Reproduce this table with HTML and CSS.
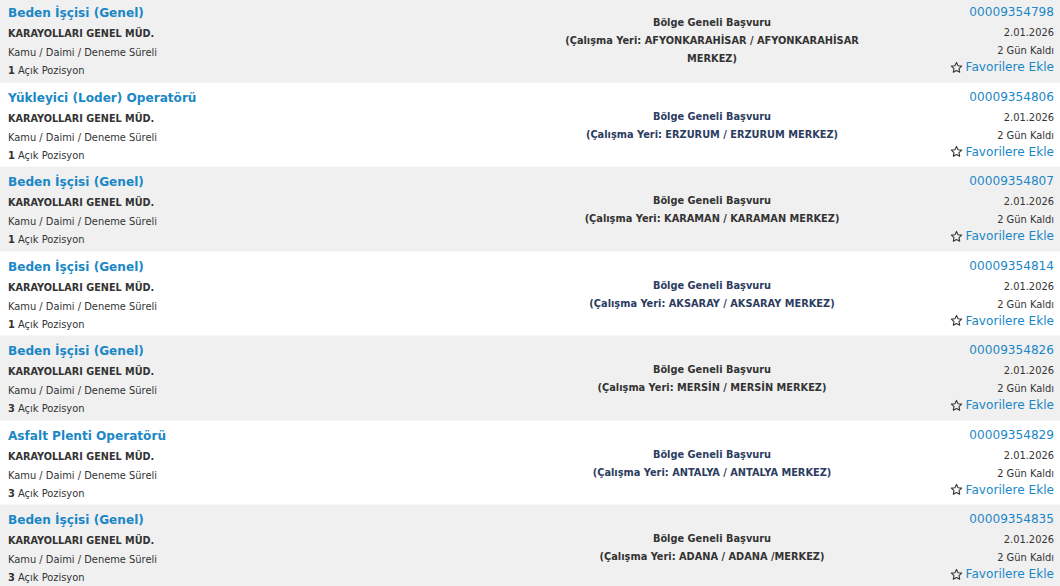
FILE: index.html
```html
<!DOCTYPE html>
<html lang="tr">
<head>
<meta charset="utf-8">
<link rel="stylesheet" href="styles.css">
</head>
<body>
<div class="list">
  <div class="row alt">
    <div class="left">
      <a class="title">Beden İşçisi (Genel)</a>
      <div class="org">KARAYOLLARI GENEL MÜD.</div>
      <div class="sub">Kamu / Daimi / Deneme Süreli</div>
      <div class="sub"><b>1</b> Açık Pozisyon</div>
    </div>
    <div class="mid">Bölge Geneli Başvuru<br>(Çalışma Yeri: AFYONKARAHİSAR / AFYONKARAHİSAR MERKEZ)</div>
    <div class="right">
      <a class="num">00009354798</a>
      <div class="sub">2.01.2026</div>
      <div class="sub">2 Gün Kaldı</div>
      <a class="fav"><svg class="star" viewBox="0 0 24 24"><path d="M12 2.6l2.9 6.1 6.6.8-4.9 4.6 1.3 6.6L12 17.4l-5.9 3.3 1.3-6.6-4.9-4.6 6.6-.8z"/></svg>Favorilere Ekle</a>
    </div>
  </div>
  <div class="row">
    <div class="left">
      <a class="title">Yükleyici (Loder) Operatörü</a>
      <div class="org">KARAYOLLARI GENEL MÜD.</div>
      <div class="sub">Kamu / Daimi / Deneme Süreli</div>
      <div class="sub"><b>1</b> Açık Pozisyon</div>
    </div>
    <div class="mid">Bölge Geneli Başvuru<br>(Çalışma Yeri: ERZURUM / ERZURUM MERKEZ)</div>
    <div class="right">
      <a class="num">00009354806</a>
      <div class="sub">2.01.2026</div>
      <div class="sub">2 Gün Kaldı</div>
      <a class="fav"><svg class="star" viewBox="0 0 24 24"><path d="M12 2.6l2.9 6.1 6.6.8-4.9 4.6 1.3 6.6L12 17.4l-5.9 3.3 1.3-6.6-4.9-4.6 6.6-.8z"/></svg>Favorilere Ekle</a>
    </div>
  </div>
  <div class="row alt">
    <div class="left">
      <a class="title">Beden İşçisi (Genel)</a>
      <div class="org">KARAYOLLARI GENEL MÜD.</div>
      <div class="sub">Kamu / Daimi / Deneme Süreli</div>
      <div class="sub"><b>1</b> Açık Pozisyon</div>
    </div>
    <div class="mid">Bölge Geneli Başvuru<br>(Çalışma Yeri: KARAMAN / KARAMAN MERKEZ)</div>
    <div class="right">
      <a class="num">00009354807</a>
      <div class="sub">2.01.2026</div>
      <div class="sub">2 Gün Kaldı</div>
      <a class="fav"><svg class="star" viewBox="0 0 24 24"><path d="M12 2.6l2.9 6.1 6.6.8-4.9 4.6 1.3 6.6L12 17.4l-5.9 3.3 1.3-6.6-4.9-4.6 6.6-.8z"/></svg>Favorilere Ekle</a>
    </div>
  </div>
  <div class="row">
    <div class="left">
      <a class="title">Beden İşçisi (Genel)</a>
      <div class="org">KARAYOLLARI GENEL MÜD.</div>
      <div class="sub">Kamu / Daimi / Deneme Süreli</div>
      <div class="sub"><b>1</b> Açık Pozisyon</div>
    </div>
    <div class="mid">Bölge Geneli Başvuru<br>(Çalışma Yeri: AKSARAY / AKSARAY MERKEZ)</div>
    <div class="right">
      <a class="num">00009354814</a>
      <div class="sub">2.01.2026</div>
      <div class="sub">2 Gün Kaldı</div>
      <a class="fav"><svg class="star" viewBox="0 0 24 24"><path d="M12 2.6l2.9 6.1 6.6.8-4.9 4.6 1.3 6.6L12 17.4l-5.9 3.3 1.3-6.6-4.9-4.6 6.6-.8z"/></svg>Favorilere Ekle</a>
    </div>
  </div>
  <div class="row alt">
    <div class="left">
      <a class="title">Beden İşçisi (Genel)</a>
      <div class="org">KARAYOLLARI GENEL MÜD.</div>
      <div class="sub">Kamu / Daimi / Deneme Süreli</div>
      <div class="sub"><b>3</b> Açık Pozisyon</div>
    </div>
    <div class="mid">Bölge Geneli Başvuru<br>(Çalışma Yeri: MERSİN / MERSİN MERKEZ)</div>
    <div class="right">
      <a class="num">00009354826</a>
      <div class="sub">2.01.2026</div>
      <div class="sub">2 Gün Kaldı</div>
      <a class="fav"><svg class="star" viewBox="0 0 24 24"><path d="M12 2.6l2.9 6.1 6.6.8-4.9 4.6 1.3 6.6L12 17.4l-5.9 3.3 1.3-6.6-4.9-4.6 6.6-.8z"/></svg>Favorilere Ekle</a>
    </div>
  </div>
  <div class="row">
    <div class="left">
      <a class="title">Asfalt Plenti Operatörü</a>
      <div class="org">KARAYOLLARI GENEL MÜD.</div>
      <div class="sub">Kamu / Daimi / Deneme Süreli</div>
      <div class="sub"><b>3</b> Açık Pozisyon</div>
    </div>
    <div class="mid">Bölge Geneli Başvuru<br>(Çalışma Yeri: ANTALYA / ANTALYA MERKEZ)</div>
    <div class="right">
      <a class="num">00009354829</a>
      <div class="sub">2.01.2026</div>
      <div class="sub">2 Gün Kaldı</div>
      <a class="fav"><svg class="star" viewBox="0 0 24 24"><path d="M12 2.6l2.9 6.1 6.6.8-4.9 4.6 1.3 6.6L12 17.4l-5.9 3.3 1.3-6.6-4.9-4.6 6.6-.8z"/></svg>Favorilere Ekle</a>
    </div>
  </div>
  <div class="row alt">
    <div class="left">
      <a class="title">Beden İşçisi (Genel)</a>
      <div class="org">KARAYOLLARI GENEL MÜD.</div>
      <div class="sub">Kamu / Daimi / Deneme Süreli</div>
      <div class="sub"><b>3</b> Açık Pozisyon</div>
    </div>
    <div class="mid">Bölge Geneli Başvuru<br>(Çalışma Yeri: ADANA / ADANA /MERKEZ)</div>
    <div class="right">
      <a class="num">00009354835</a>
      <div class="sub">2.01.2026</div>
      <div class="sub">2 Gün Kaldı</div>
      <a class="fav"><svg class="star" viewBox="0 0 24 24"><path d="M12 2.6l2.9 6.1 6.6.8-4.9 4.6 1.3 6.6L12 17.4l-5.9 3.3 1.3-6.6-4.9-4.6 6.6-.8z"/></svg>Favorilere Ekle</a>
    </div>
  </div>
</div>
</body>
</html>
```
FILE: styles.css
```css
html, body {
  margin: 0;
  padding: 0;
  background: #ffffff;
}
body {
  font-family: "DejaVu Sans", Verdana, sans-serif;
  color: #333333;
  overflow: hidden;
}
.list {
  margin-top: -2px;
  display: flex;
  flex-direction: column;
}
.row {
  height: 84.5px;
  box-sizing: border-box;
  display: grid;
  grid-template-columns: 1fr 352px 166px;
  padding: 5px 6px 0 8px;
  background: #ffffff;
  border-bottom: 1px solid #f7f7f7;
}
.row.alt {
  background: #f0f0f0;
}
.left, .right {
  display: flex;
  flex-direction: column;
}
.right {
  align-items: flex-end;
  margin-top: -1px;
}
.title {
  font-size: 12.1px;
  font-weight: bold;
  color: #1a87c6;
  line-height: 20px;
  margin-bottom: 1px;
}
.org {
  font-size: 9.7px;
  font-weight: bold;
  color: #333333;
  line-height: 20px;
}
.sub {
  font-size: 9.9px;
  color: #333333;
  line-height: 18px;
}
.sub b {
  font-weight: bold;
}
.mid {
  align-self: center;
  text-align: center;
  font-size: 9.8px;
  font-weight: bold;
  line-height: 18px;
  color: #2c3c60;
  margin-top: -2px;
  padding: 0 16px;
}
.row.alt .mid {
  color: #333333;
}
.num {
  font-size: 12.1px;
  color: #1a87c6;
  line-height: 21px;
  margin-bottom: 1px;
}
.fav {
  font-size: 12.1px;
  color: #1a87c6;
  line-height: 16px;
  display: flex;
  align-items: center;
  gap: 3px;
  margin-top: -1px;
}
.star {
  width: 13px;
  height: 13px;
  fill: none;
  stroke: #333333;
  stroke-width: 2;
  stroke-linejoin: round;
}
```
